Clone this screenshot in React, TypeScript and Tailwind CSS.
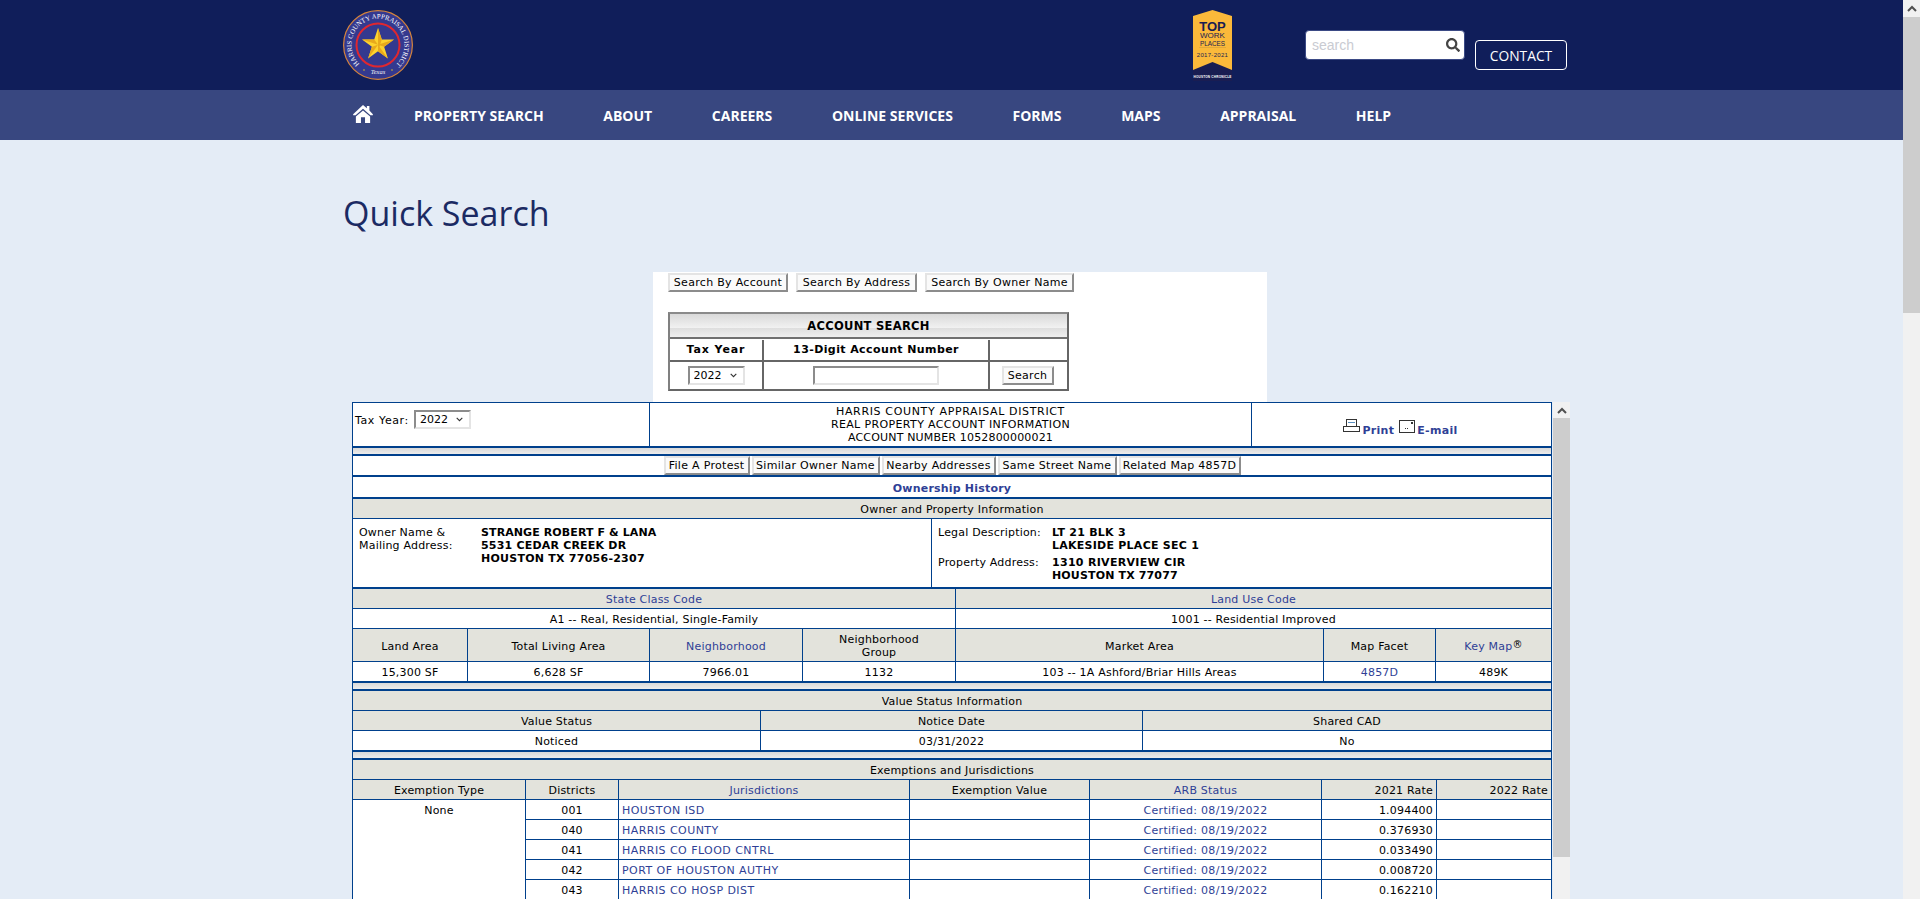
import React from "react";
import { FaSearch } from "react-icons/fa";

const cellBase = "flex items-center justify-center border-r border-[#00408c] pt-[2px] text-center";
const lastCell = "flex flex-1 items-center justify-center pt-[2px] text-center";
const link = "text-[#2f3f96]";
const thick = "h-[2px] bg-[#00408c]";
const thin = "h-px bg-[#00408c]";
const spacer = "h-[6px] bg-gradient-to-b from-[#d9d9d9] to-[#ececec]";
const gray = "bg-[#e3e3dc]";

function PageScrollbar() {
  return (
    <div className="flex h-[899px] w-[17px] shrink-0 flex-col bg-[#f1f1f1]">
      <div className="flex h-[17px] items-center justify-center">
        <Chevron />
      </div>
      <div className="h-[296px] bg-[#cdcdcd]" />
    </div>
  );
}

function Chevron() {
  return (
    <svg width="10" height="7" viewBox="0 0 10 7">
      <path d="M1 6 L5 2 L9 6" fill="none" stroke="#505050" strokeWidth="2" />
    </svg>
  );
}

function Logo() {
  const star = "35,18 38.8,29.6 51,29.6 41.1,36.8 44.9,48.4 35,41.2 25.1,48.4 28.9,36.8 19,29.6 31.2,29.6";
  return (
    <svg width="70" height="70" viewBox="0 0 70 70">
      <defs>
        <path id="ringText" d="M16.5 54 A26.5 26.5 0 1 1 53.5 54" />
      </defs>
      <circle cx="35" cy="35" r="34.4" fill="#34398f" stroke="#d6843c" strokeWidth="1.2" />
      <circle cx="35" cy="35" r="21.5" fill="#34398f" stroke="#e0272f" strokeWidth="2" />
      <polygon points={star} fill="#fdd22e" />
      <polygon points="35,18 35,41.2 38.8,29.6" fill="#e8a91c" />
      <polygon points="51,29.6 35,34.8 41.1,36.8" fill="#e8a91c" />
      <polygon points="44.9,48.4 35,34.8 35,41.2" fill="#e8a91c" />
      <polygon points="25.1,48.4 35,34.8 28.9,36.8" fill="#e8a91c" />
      <polygon points="19,29.6 35,34.8 31.2,29.6" fill="#e8a91c" />
      <text fontFamily="'Liberation Serif', serif" fontSize="6.8" fill="#ffffff">
        <textPath href="#ringText" textLength="126" lengthAdjust="spacingAndGlyphs">
          HARRIS COUNTY APPRAISAL DISTRICT
        </textPath>
      </text>
      <text x="35" y="63.5" textAnchor="middle" fontFamily="'Liberation Serif', serif" fontStyle="italic" fontSize="6.5" fill="#f2f2f6">
        Texas
      </text>
      <circle cx="21" cy="60" r="0.8" fill="#d9c02a" />
      <circle cx="49" cy="60" r="0.8" fill="#d9c02a" />
    </svg>
  );
}

function Badge() {
  return (
    <svg width="39" height="71" viewBox="0 0 39 71">
      <polygon points="0,52 19.5,50 39,52 39,71 0,71" fill="#191d52" />
      <polygon points="0,6 19.5,0 39,6 39,60 19.5,52 0,60" fill="#fbb93a" />
      <text x="19.5" y="20.5" textAnchor="middle" fontFamily="'Liberation Sans', sans-serif" fontWeight="700" fontSize="13" fill="#191d52">TOP</text>
      <text x="19.5" y="28" textAnchor="middle" fontFamily="'Liberation Sans', sans-serif" fontSize="8" fill="#191d52">WORK</text>
      <text x="19.5" y="35.5" textAnchor="middle" fontFamily="'Liberation Sans', sans-serif" fontSize="6.4" fill="#191d52">PLACES</text>
      <line x1="6" y1="37.5" x2="33" y2="37.5" stroke="#c9963a" strokeWidth="0.5" />
      <text x="19.5" y="47" textAnchor="middle" fontFamily="'Liberation Sans', sans-serif" fontSize="6" letterSpacing="0.3" fill="#191d52">2017-2021</text>
      <text x="19.5" y="67.5" textAnchor="middle" fontFamily="'Liberation Sans', sans-serif" fontWeight="700" fontSize="3.1" letterSpacing="0.2" fill="#ffffff">HOUSTON CHRONICLE</text>
    </svg>
  );
}

function HomeIcon() {
  return (
    <svg width="20" height="18" viewBox="0 0 19.4 17.7" fill="#ffffff">
      <path d="M9.7 0 L13.5 3.3 V1 H16 V5.5 L19.4 9 V10 H17 L9.7 3.8 L2.4 10 H0 V9 Z" />
      <path d="M9.7 5.5 L16.7 11.3 V17.7 H11.7 V12 H7.7 V17.7 H2.7 V11.3 Z" />
    </svg>
  );
}

function PrintIcon() {
  return (
    <svg width="17" height="13" viewBox="0 0 17 13" fill="none" stroke="#333" strokeWidth="1">
      <rect x="3.5" y="0.5" width="10" height="7" />
      <line x1="5" y1="3.5" x2="12" y2="3.5" stroke="#5a8fc0" />
      <rect x="0.5" y="7.5" width="16" height="5" />
    </svg>
  );
}

function MailIcon() {
  return (
    <svg width="16" height="14" viewBox="0 0 16 14" fill="none" stroke="#333" strokeWidth="1">
      <rect x="0.5" y="1.5" width="15" height="12" />
      <line x1="6" y1="9.5" x2="10" y2="9.5" strokeDasharray="1 1" />
      <rect x="12" y="3" width="2" height="2" fill="#333" stroke="none" />
    </svg>
  );
}

const btn =
  "h-[19px] border-2 border-t-[#e4e4e4] border-l-[#e4e4e4] border-r-[#8c8c8c] border-b-[#8c8c8c] bg-[#fafafa] px-0 text-[11px] tracking-[0.3px] leading-none text-black whitespace-nowrap";

function YearSelect() {
  return (
    <span className="relative block h-[19px] w-[57px]">
      <select
        defaultValue="2022"
        className="block h-[19px] w-[57px] appearance-none border-2 border-t-[#8c8c8c] border-l-[#8c8c8c] border-r-[#e4e4e4] border-b-[#e4e4e4] bg-white pl-[4px] text-[11px] tracking-normal text-black"
      >
        <option>2022</option>
      </select>
      <svg className="pointer-events-none absolute right-[8px] top-[7px]" width="7" height="5" viewBox="0 0 7 5">
        <path d="M0.7 0.8 L3.5 3.6 L6.3 0.8" fill="none" stroke="#333" strokeWidth="1.1" />
      </svg>
    </span>
  );
}

function SearchBox() {
  return (
    <div className="ml-[310px] h-[130px] w-[614px] bg-white pl-[15px] pt-px text-black">
      <div className="flex gap-[8px]">
        <button className={`${btn} w-[120px]`}>Search By Account</button>
        <button className={`${btn} w-[121px]`}>Search By Address</button>
        <button className={`${btn} w-[149px]`}>Search By Owner Name</button>
      </div>
      <div className="mt-[20px] w-[401px] border-2 border-[#666666] border-t-[#8a8a8a] border-l-[#808080]">
        <div className="flex h-[25px] items-center justify-center border-b-2 border-[#707070] bg-[linear-gradient(#d9d9d9,#f2f2f2_62%,#dedede_62%,#efefef)] pt-[2px] text-[11.5px] font-bold tracking-[0.3px]">
          ACCOUNT SEARCH
        </div>
        <div className="flex h-[23px] border-b-2 border-[#666666] pt-px text-[11px] font-bold tracking-[0.4px]">
          <div className="flex w-[94px] items-center justify-center border-r-2 border-[#666666] tracking-[0.9px]">Tax Year</div>
          <div className="flex w-[226px] items-center justify-center border-r-2 border-[#666666]">13-Digit Account Number</div>
          <div className="flex-1" />
        </div>
        <div className="flex h-[27px]">
          <div className="flex w-[94px] items-center justify-center border-r-2 border-[#666666]">
            <YearSelect />
          </div>
          <div className="flex w-[226px] items-center justify-center border-r-2 border-[#666666]">
            <input className="h-[19px] w-[126px] border-2 border-t-[#8c8c8c] border-l-[#8c8c8c] border-r-[#e4e4e4] border-b-[#e4e4e4] bg-white" />
          </div>
          <div className="flex flex-1 items-center justify-center pr-[2px]">
            <button className={`${btn} w-[52px]`}>Search</button>
          </div>
        </div>
      </div>
    </div>
  );
}

function DetailTable() {
  const rows = [
    ["001", "HOUSTON ISD", "1.094400"],
    ["040", "HARRIS COUNTY", "0.376930"],
    ["041", "HARRIS CO FLOOD CNTRL", "0.033490"],
    ["042", "PORT OF HOUSTON AUTHY", "0.008720"],
    ["043", "HARRIS CO HOSP DIST", "0.162210"],
  ];
  return (
    <div className="w-[1200px] border-x border-t border-[#00408c] bg-white text-[11px] leading-[13px] tracking-[0.2px] text-black">
      <div className="flex h-[43px]">
        <div className="flex w-[297px] items-start gap-[3px] border-r border-[#00408c] pl-[2px] pt-[7px]">
          <span className="mt-[4px] w-[56px] tracking-[0.6px]">Tax Year:</span>
          <YearSelect />
        </div>
        <div className="flex w-[602px] items-center justify-center border-r border-[#00408c] text-center">
          <div>
            <div className="tracking-[0.65px]">HARRIS COUNTY APPRAISAL DISTRICT</div>
            <div className="tracking-[0.37px]">REAL PROPERTY ACCOUNT INFORMATION</div>
            <div className="tracking-[0.17px]">ACCOUNT NUMBER 1052800000021</div>
          </div>
        </div>
        <div className="flex flex-1 items-center justify-center pr-[2px] pt-[11px] font-bold tracking-[0.3px]">
          <span className="mb-[9px]"><PrintIcon /></span>
          <span className={`${link} ml-[2px]`}>Print</span>
          <span className="mb-[9px] ml-[5px]"><MailIcon /></span>
          <span className={`${link} ml-[2px]`}>E-mail</span>
        </div>
      </div>
      <div className={thick} />
      <div className={spacer} />
      <div className={thick} />
      <div className="flex h-[19px] items-end justify-center gap-[2px]">
        <button className={`${btn} h-[18px] w-[86px]`}>File A Protest</button>
        <button className={`${btn} h-[18px] w-[128px]`}>Similar Owner Name</button>
        <button className={`${btn} h-[18px] w-[114px]`}>Nearby Addresses</button>
        <button className={`${btn} h-[18px] w-[119px]`}>Same Street Name</button>
        <button className={`${btn} h-[18px] w-[122px]`}>Related Map 4857D</button>
      </div>
      <div className={thick} />
      <div className={`flex h-[20px] items-center justify-center pt-[2px] font-bold tracking-[0.2px] ${link}`}>Ownership History</div>
      <div className={thick} />
      <div className={`flex h-[19px] items-center justify-center pt-[2px] ${gray}`}>Owner and Property Information</div>
      <div className={thin} />
      <div className="flex h-[68px]">
        <div className="flex w-[579px] gap-[20px] border-r border-[#00408c] pl-[6px] pt-[7px]">
          <div className="w-[102px]">
            Owner Name &amp;
            <br />
            Mailing Address:
          </div>
          <div className="font-bold">
            <div className="tracking-[0.1px]">STRANGE ROBERT F &amp; LANA</div>
            <div className="tracking-[0.2px]">5531 CEDAR CREEK DR</div>
            <div className="tracking-[0.25px]">HOUSTON TX 77056-2307</div>
          </div>
        </div>
        <div className="flex flex-col pl-[6px] pt-[7px]">
          <div className="flex">
            <div className="w-[114px]">Legal Description:</div>
            <div className="font-bold tracking-[0.25px]">
              LT 21 BLK 3
              <br />
              LAKESIDE PLACE SEC 1
            </div>
          </div>
          <div className="mt-[4px] flex">
            <div className="w-[114px]">Property Address:</div>
            <div className="font-bold">
              <div className="tracking-[0.3px]">1310 RIVERVIEW CIR</div>
              <div className="tracking-[0.15px]">HOUSTON TX 77077</div>
            </div>
          </div>
        </div>
      </div>
      <div className={thick} />
      <div className={`flex h-[19px] ${gray}`}>
        <div className={`${cellBase} w-[603px] ${link}`}>State Class Code</div>
        <div className={`${lastCell} ${link}`}>Land Use Code</div>
      </div>
      <div className={thin} />
      <div className="flex h-[19px]">
        <div className={`${cellBase} w-[603px]`}>A1 -- Real, Residential, Single-Family</div>
        <div className={lastCell}>1001 -- Residential Improved</div>
      </div>
      <div className={thin} />
      <div className={`flex h-[32px] ${gray}`}>
        <div className={`${cellBase} w-[115px]`}>Land Area</div>
        <div className={`${cellBase} w-[182px]`}>Total Living Area</div>
        <div className={`${cellBase} w-[153px] ${link}`}>Neighborhood</div>
        <div className={`${cellBase} w-[153px]`}>
          <div>
            Neighborhood
            <br />
            Group
          </div>
        </div>
        <div className={`${cellBase} w-[368px]`}>Market Area</div>
        <div className={`${cellBase} w-[112px]`}>Map Facet</div>
        <div className={lastCell}>
          <span className={link}>Key Map</span>
          <span className="-mt-[3px] text-[10px]">®</span>
        </div>
      </div>
      <div className={thin} />
      <div className="flex h-[19px]">
        <div className={`${cellBase} w-[115px]`}>15,300 SF</div>
        <div className={`${cellBase} w-[182px]`}>6,628 SF</div>
        <div className={`${cellBase} w-[153px]`}>7966.01</div>
        <div className={`${cellBase} w-[153px]`}>1132</div>
        <div className={`${cellBase} w-[368px]`}>103 -- 1A Ashford/Briar Hills Areas</div>
        <div className={`${cellBase} w-[112px] ${link}`}>4857D</div>
        <div className={lastCell}>489K</div>
      </div>
      <div className={thick} />
      <div className={spacer} />
      <div className={thick} />
      <div className={`flex h-[19px] items-center justify-center pt-[2px] ${gray}`}>Value Status Information</div>
      <div className={thin} />
      <div className={`flex h-[19px] ${gray}`}>
        <div className={`${cellBase} w-[408px]`}>Value Status</div>
        <div className={`${cellBase} w-[382px]`}>Notice Date</div>
        <div className={lastCell}>Shared CAD</div>
      </div>
      <div className={thin} />
      <div className="flex h-[19px]">
        <div className={`${cellBase} w-[408px]`}>Noticed</div>
        <div className={`${cellBase} w-[382px]`}>03/31/2022</div>
        <div className={lastCell}>No</div>
      </div>
      <div className={thick} />
      <div className={spacer} />
      <div className={thick} />
      <div className={`flex h-[19px] items-center justify-center pt-[2px] ${gray}`}>Exemptions and Jurisdictions</div>
      <div className={thin} />
      <div className={`flex h-[19px] ${gray}`}>
        <div className={`${cellBase} w-[173px]`}>Exemption Type</div>
        <div className={`${cellBase} w-[93px]`}>Districts</div>
        <div className={`${cellBase} w-[291px] ${link}`}>Jurisdictions</div>
        <div className={`${cellBase} w-[180px]`}>Exemption Value</div>
        <div className={`${cellBase} w-[232px] ${link}`}>ARB Status</div>
        <div className="flex w-[115px] items-center justify-end border-r border-[#00408c] pr-[3px] pt-[2px]">2021 Rate</div>
        <div className="flex flex-1 items-center justify-end pr-[3px] pt-[2px]">2022 Rate</div>
      </div>
      <div className={thin} />
      <div className="flex">
        <div className="w-[173px] border-r border-[#00408c] pt-[4px] text-center">None</div>
        <div className="flex-1">
          {rows.map(([code, name, rate]) => (
            <div key={code} className="flex h-[20px] border-b border-[#00408c]">
              <div className={`${cellBase} w-[93px]`}>{code}</div>
              <div className={`flex w-[291px] items-center border-r border-[#00408c] pl-[3px] pt-[2px] tracking-[0.45px] ${link}`}>{name}</div>
              <div className="w-[180px] border-r border-[#00408c]" />
              <div className={`${cellBase} w-[232px] tracking-[0.3px] ${link}`}>Certified: 08/19/2022</div>
              <div className="flex w-[115px] items-center justify-end border-r border-[#00408c] pr-[3px] pt-[2px]">{rate}</div>
              <div className="flex-1" />
            </div>
          ))}
        </div>
      </div>
    </div>
  );
}

export default function App() {
  const nav = ["PROPERTY SEARCH", "ABOUT", "CAREERS", "ONLINE SERVICES", "FORMS", "MAPS", "APPRAISAL", "HELP"];
  return (
    <div className="flex h-[899px] overflow-hidden bg-[#e4ecf6] font-['DejaVu_Sans',sans-serif]">
      <div className="min-w-0 flex-1 overflow-hidden">
        <header className="h-[90px] bg-[#101e5a]">
          <div className="ml-[343px] flex w-[1224px] items-start">
            <div className="mt-[10px]"><Logo /></div>
            <div className="ml-[780px] mt-[10px]"><Badge /></div>
            <div className="relative ml-[73px] mt-[30px] h-[30px] w-[160px] rounded-[4px] border border-[#3b4a85] bg-white">
              <input
                placeholder="search"
                className="h-full w-full bg-transparent pl-[6px] pr-[26px] font-['Liberation_Sans',sans-serif] text-[14px] outline-none placeholder:text-[#c9cbd2]"
              />
              <FaSearch className="absolute right-[4px] top-[7px] text-[14px] text-[#444444]" />
            </div>
            <div className="ml-[10px] mt-[40px] flex h-[30px] w-[92px] items-center justify-center rounded-[4px] border border-white pt-[2px] font-['Open_Sans',sans-serif] text-[13.8px] text-white">
              CONTACT
            </div>
          </div>
        </header>
        <nav className="h-[50px] bg-[#384780]">
          <div className="ml-[353px] flex h-full items-center font-['Open_Sans',sans-serif] text-[14px] font-bold text-white">
            <span className="-mt-[3px] mr-[41px]"><HomeIcon /></span>
            <div className="flex gap-[59.65px]">
              {nav.map((n) => (
                <a key={n} className="whitespace-nowrap">{n}</a>
              ))}
            </div>
          </div>
        </nav>
        <main className="ml-[343px]">
          <h1 className="h-[132px] pt-[53px] font-['Open_Sans',sans-serif] text-[34px] leading-[40px] text-[#1b2a63]">
            Quick Search
          </h1>
          <SearchBox />
          <div className="ml-[9px] flex w-[1218px]">
            <DetailTable />
            <div className="ml-px w-[17px] bg-[#f1f1f1]">
              <div className="flex h-[16px] items-center justify-center"><Chevron /></div>
              <div className="h-[439px] bg-[#cdcdcd]" />
            </div>
          </div>
        </main>
      </div>
      <PageScrollbar />
    </div>
  );
}
